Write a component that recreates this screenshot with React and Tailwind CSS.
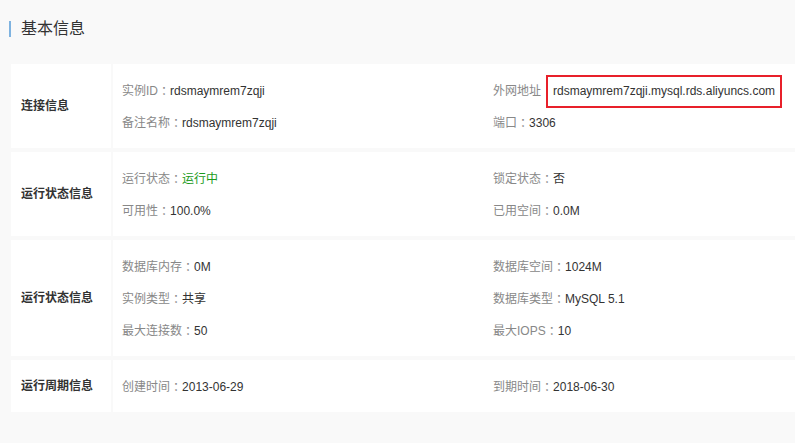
const font = { fontFamily: '"Liberation Sans", "Noto Sans CJK SC", sans-serif' };
const colonFont = { fontFamily: '"Noto Sans CJK TC", sans-serif' };

function Item({ label, value, valueClass = "text-[#333]" }) {
  return (
    <div className="flex h-[32px] items-center whitespace-nowrap">
      <span className="text-[#888]">{label}</span>
      <span className="text-[#888]" style={colonFont}>：</span>
      <span className={valueClass}>{value}</span>
    </div>
  );
}

function Section({ title, children }) {
  return (
    <div className="flex gap-[2px]">
      <div className="flex w-[100px] shrink-0 items-center bg-white pl-[10px] text-[12px] font-bold text-[#333]">
        {title}
      </div>
      <div className="grid flex-1 grid-cols-[371px_1fr] bg-white pt-[11px] pb-[9px] pl-[9px] text-[12px]">
        {children}
      </div>
    </div>
  );
}

export default function App() {
  return (
    <div className="min-h-[443px] w-[795px] bg-[#f9f9f9]" style={font}>
      <div className="flex items-center pl-[9px] pt-[21px]">
        <div className="h-[16px] w-[2px] bg-[#7fb3e0]" />
        <h2 className="ml-[10px] text-[16px] leading-[16px] text-[#333]">基本信息</h2>
      </div>
      <div className="ml-[11px] mt-[27px] flex flex-col gap-[4px]">
        <Section title="连接信息">
          <Item label="实例ID" value="rdsmaymrem7zqji" />
          <div className="flex h-[32px] items-center whitespace-nowrap">
            <span className="text-[#888]">外网地址</span>
            <span className="ml-[5px] border-2 border-[#e8202a] px-[5px] py-[6px] leading-[17px] text-[#333]">
              rdsmaymrem7zqji.mysql.rds.aliyuncs.com
            </span>
          </div>
          <Item label="备注名称" value="rdsmaymrem7zqji" />
          <Item label="端口" value="3306" />
        </Section>
        <Section title="运行状态信息">
          <Item label="运行状态" value="运行中" valueClass="text-[#1a9a1a]" />
          <Item label="锁定状态" value="否" />
          <Item label="可用性" value="100.0%" />
          <Item label="已用空间" value="0.0M" />
        </Section>
        <Section title="运行状态信息">
          <Item label="数据库内存" value="0M" />
          <Item label="数据库空间" value="1024M" />
          <Item label="实例类型" value="共享" />
          <Item label="数据库类型" value="MySQL 5.1" />
          <Item label="最大连接数" value="50" />
          <Item label="最大IOPS" value="10" />
        </Section>
        <Section title="运行周期信息">
          <Item label="创建时间" value="2013-06-29" />
          <Item label="到期时间" value="2018-06-30" />
        </Section>
      </div>
    </div>
  );
}
